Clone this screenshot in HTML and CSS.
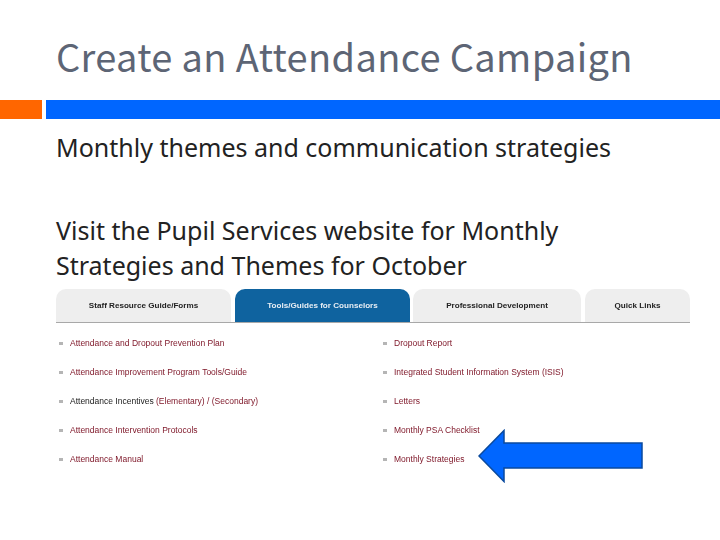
FILE: index.html
```html
<!DOCTYPE html>
<html lang="en">
<head>
  <meta charset="UTF-8" />
  <title>Create an Attendance Campaign</title>
  <link rel="stylesheet" href="styles.css">
</head>
<body>
  <h1 class="title">Create an Attendance Campaign</h1>
  <div class="rule">
    <div class="rule-orange"></div>
    <div class="rule-blue"></div>
  </div>
  <div class="body-text">
    <p class="first">Monthly themes and communication strategies</p>
    <p>Visit the Pupil Services website for Monthly Strategies and Themes for October</p>
  </div>

  <div class="shot">
    <div class="tabs">
      <div class="tab tab-staff">Staff Resource Guide/Forms</div>
      <div class="tab tab-tools active">Tools/Guides for Counselors</div>
      <div class="tab tab-prof">Professional Development</div>
      <div class="tab tab-quick">Quick Links</div>
    </div>
    <div class="lists">
      <ul class="links">
        <li>Attendance and Dropout Prevention Plan</li>
        <li>Attendance Improvement Program Tools/Guide</li>
        <li><span class="dark">Attendance Incentives</span> (Elementary) / (Secondary)</li>
        <li>Attendance Intervention Protocols</li>
        <li>Attendance Manual</li>
      </ul>
      <ul class="links">
        <li>Dropout Report</li>
        <li>Integrated Student Information System (ISIS)</li>
        <li>Letters</li>
        <li>Monthly PSA Checklist</li>
        <li>Monthly Strategies</li>
      </ul>
    </div>
  </div>

  <svg class="arrow" width="166" height="54" viewBox="0 0 166 54">
    <polygon points="1,27 26,1.5 26,14 164,14 164,39 26,39 26,52.5" fill="#0066ff" stroke="#0a4a9e" stroke-width="1.5" />
  </svg>
</body>
</html>
```

FILE: styles.css
```css
* {
  box-sizing: border-box;
}

body {
  margin: 0;
  position: relative;
  width: 720px;
  height: 540px;
  overflow: hidden;
  background-color: #fff;
  font-family: 'Noto Sans', sans-serif;
}

.title {
  margin: 0;
  padding: 31px 0 0 56px;
  height: 100px;
  font-family: 'Noto Sans CJK SC', 'Noto Sans', sans-serif;
  font-size: 38px;
  line-height: 50px;
  font-weight: 400;
  letter-spacing: 0.35px;
  color: #5d6575;
  white-space: nowrap;
}

.rule {
  display: flex;
  gap: 4px;
  height: 19px;
}

.rule-orange {
  width: 42px;
  background-color: #ff6600;
}

.rule-blue {
  flex: 1;
  background-color: #0066ff;
}

.body-text {
  padding: 11px 100px 0 56px;
  height: 170px;
  font-size: 25px;
  line-height: 35px;
  color: #222;
}

.body-text p {
  margin: 0;
}

.body-text .first {
  margin-bottom: 48px;
}

.shot {
  margin-left: 56px;
  width: 634px;
  font-family: 'Liberation Sans', Arial, sans-serif;
  font-size: 8.5px;
  filter: blur(0.35px);
}

.tabs {
  display: flex;
  height: 34px;
  border-bottom: 1px solid #a8a8a8;
}

.tab {
  display: flex;
  align-items: center;
  justify-content: center;
  height: 33px;
  padding-bottom: 1px;
  border-radius: 10px 10px 0 0;
  background-color: #eeeeee;
  color: #222;
  font-size: 8.1px;
  font-weight: 700;
}

.tab-staff {
  width: 175px;
}

.tab-tools {
  width: 175px;
  margin-left: 4px;
}

.tab-prof {
  width: 168px;
  margin-left: 3px;
}

.tab-quick {
  width: 105px;
  margin-left: 4px;
}

.tab.active {
  background-color: #0f639f;
  color: #e8eef4;
}

.lists {
  display: flex;
  padding-top: 6px;
}

.links {
  flex: none;
  margin: 0;
  padding: 0 0 0 14px;
  width: 324px;
  list-style: none;
  color: #7d1426;
}

.links li {
  position: relative;
  height: 29px;
  line-height: 29px;
  white-space: nowrap;
}

.links li::before {
  content: "";
  position: absolute;
  left: -11px;
  top: 13px;
  width: 4px;
  height: 3px;
  background-color: #b5b5b5;
}

.dark {
  color: #1a1a1a;
}

.arrow {
  position: absolute;
  left: 478px;
  top: 429px;
}
```
